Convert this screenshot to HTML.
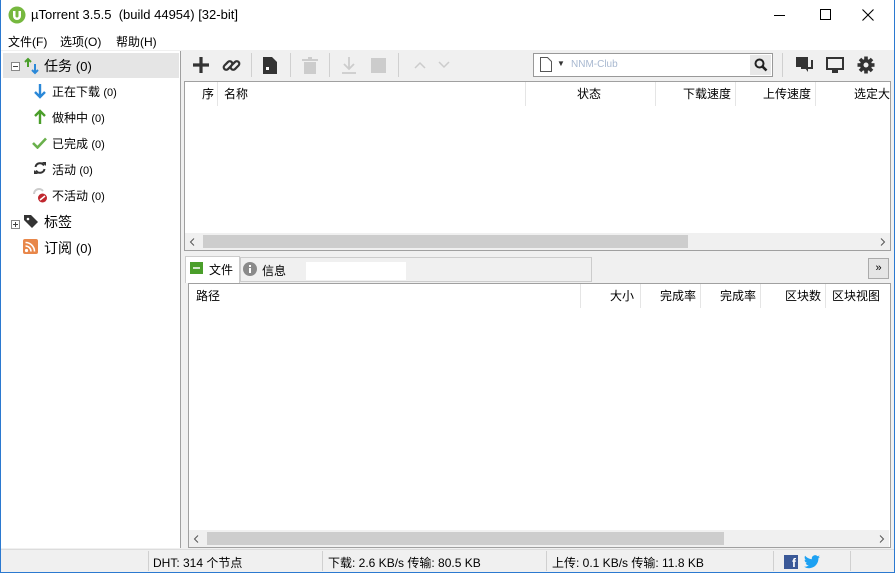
<!DOCTYPE html>
<html><head><meta charset="utf-8">
<style>
*{box-sizing:border-box;margin:0;padding:0}
body{width:895px;height:573px;position:relative;overflow:hidden;background:#f0f0f0;font-family:"Liberation Sans","Noto Sans CJK SC",sans-serif;font-size:12px;color:#000}
.a{position:absolute}
.frame{left:0;top:0;width:895px;height:573px;border:1px solid #2b79d0;border-top:none}
.t{white-space:nowrap}
.hdr{background:#fff;font-size:12px}
.col{position:absolute;top:0;height:24px;line-height:24px;border-right:1px solid #e5e5e5}
.sb{background:#f0f0f0}
.thumb{background:#cdcdcd}
.sep{width:1px;height:24px;background:#d0d0d0;top:53px}
</style></head><body>
<div class="a" style="left:0;top:0;width:895px;height:30px;background:#fff"></div>
<svg class="a" style="left:8px;top:6px" width="18" height="18" viewBox="0 0 18 18"><circle cx="9" cy="9" r="8.5" fill="#76b83f"/><path d="M5 5v5a4 4 0 0 0 8 0V5h-2.5v5a1.5 1.5 0 0 1-3 0V5z" fill="#fff"/></svg>
<div class="a t" style="left:31px;top:7px;font-size:13px">µTorrent 3.5.5 &nbsp;(build 44954) [32-bit]</div>
<div class="a" style="left:774px;top:15px;width:11px;height:1px;background:#000"></div>
<div class="a" style="left:820px;top:9px;width:11px;height:11px;border:1px solid #000"></div>
<svg class="a" style="left:862px;top:9px" width="12" height="12"><path d="M0.5 0.5L11.5 11.5M11.5 0.5L0.5 11.5" stroke="#000" stroke-width="1.1"/></svg>
<div class="a" style="left:0;top:30px;width:895px;height:20px;background:#fff"></div>
<div class="a t" style="left:8px;top:33px">文件(F)</div>
<div class="a t" style="left:60px;top:33px">选项(O)</div>
<div class="a t" style="left:116px;top:33px">帮助(H)</div>
<!-- sidebar -->
<div class="a" style="left:1px;top:51px;width:180px;height:497px;background:#fff;border-right:1px solid #a0a0a0"></div>
<div class="a" style="left:3px;top:53px;width:176px;height:25px;background:#e5e5e5"></div>
<svg class="a" style="left:11px;top:62px" width="9" height="9"><rect x="0.5" y="0.5" width="8" height="8" fill="#fff" stroke="#888"/><path d="M2 4.5h5" stroke="#444"/></svg>
<svg class="a" style="left:23px;top:57px" width="18" height="18"><path d="M5 10V2M2 5l3-3 3 3" stroke="#4a9e2a" stroke-width="2" fill="none"/><path d="M12 7v9M9 13l3 3 3-3" stroke="#2a88d8" stroke-width="2" fill="none"/></svg>
<div class="a t" style="left:44px;top:56px;font-size:14px">任务 <span style="font-size:13px">(0)</span></div>
<svg class="a" style="left:33px;top:83px" width="14" height="16"><path d="M7 1v13M2 9l5 5 5-5" stroke="#2a88d8" stroke-width="2.4" fill="none"/></svg>
<div class="a t" style="left:52px;top:83px">正在下载 <span style="font-size:11px">(0)</span></div>
<svg class="a" style="left:33px;top:109px" width="14" height="16"><path d="M7 15V2M2 7l5-5 5 5" stroke="#4a9e2a" stroke-width="2.4" fill="none"/></svg>
<div class="a t" style="left:52px;top:109px">做种中 <span style="font-size:11px">(0)</span></div>
<svg class="a" style="left:32px;top:137px" width="15" height="12"><path d="M1 6l4.5 4.5L14 1.5" stroke="#6ab04c" stroke-width="2.6" fill="none"/></svg>
<div class="a t" style="left:52px;top:135px">已完成 <span style="font-size:11px">(0)</span></div>
<svg class="a" style="left:33px;top:161px" width="14" height="14"><path d="M2.5 6A4.6 4.6 0 0 1 11 4.5M11.5 8A4.6 4.6 0 0 1 3 9.5" stroke="#333" stroke-width="2" fill="none"/><path d="M9 1l4 0 0 4z M5 13l-4 0 0-4z" fill="#333"/></svg>
<div class="a t" style="left:52px;top:161px">活动 <span style="font-size:11px">(0)</span></div>
<svg class="a" style="left:31px;top:186px" width="18" height="18"><path d="M3 8A5 5 0 0 1 12 5" stroke="#ccc" stroke-width="2" fill="none"/><circle cx="11.5" cy="12" r="4.5" fill="#c0262d"/><path d="M9 14l5-4" stroke="#fff" stroke-width="1.5"/></svg>
<div class="a t" style="left:52px;top:187px">不活动 <span style="font-size:11px">(0)</span></div>
<svg class="a" style="left:11px;top:220px" width="9" height="9"><rect x="0.5" y="0.5" width="8" height="8" fill="#fff" stroke="#888"/><path d="M2 4.5h5M4.5 2v5" stroke="#444"/></svg>
<svg class="a" style="left:23px;top:213px" width="16" height="16"><path d="M1 2h7l7 7-6 6-8-8z" fill="#333"/><circle cx="5" cy="6" r="1.3" fill="#fff"/></svg>
<div class="a t" style="left:44px;top:212px;font-size:14px">标签</div>
<svg class="a" style="left:23px;top:239px" width="15" height="15"><rect width="15" height="15" rx="2" fill="#e8874a"/><circle cx="3.5" cy="11.5" r="1.6" fill="#fff"/><path d="M2.5 7a5.5 5.5 0 0 1 5.5 5.5M2.5 3.5a9 9 0 0 1 9 9" stroke="#fff" stroke-width="1.6" fill="none"/></svg>
<div class="a t" style="left:44px;top:238px;font-size:14px">订阅 <span style="font-size:13px">(0)</span></div>
<!-- toolbar -->
<svg class="a" style="left:193px;top:57px" width="16" height="16"><path d="M8 0v16M0 8h16" stroke="#333" stroke-width="3.2"/></svg>
<svg class="a" style="left:222px;top:56px" width="19" height="19"><g stroke="#333" stroke-width="2.2" fill="none"><rect x="1" y="7" width="10" height="5" rx="2.5" transform="rotate(-45 6 9.5)"/><rect x="8" y="7" width="10" height="5" rx="2.5" transform="rotate(-45 13 9.5)"/></g></svg>
<div class="a sep" style="left:251px"></div>
<svg class="a" style="left:263px;top:57px" width="14" height="17"><path d="M0 0h9l5 5v12H0z" fill="#333"/><rect x="3" y="10" width="3" height="3" fill="#fff"/></svg>
<div class="a sep" style="left:290px"></div>
<svg class="a" style="left:302px;top:57px" width="16" height="17"><rect x="0" y="2" width="16" height="2" fill="#ccc"/><rect x="6" y="0" width="4" height="2" fill="#ccc"/><rect x="2" y="5" width="12" height="12" fill="#ccc"/></svg>
<div class="a sep" style="left:329px"></div>
<svg class="a" style="left:341px;top:57px" width="16" height="17"><path d="M8 0v12M3 7l5 5 5-5M1 16h14" stroke="#ccc" stroke-width="1.8" fill="none"/></svg>
<div class="a" style="left:371px;top:58px;width:15px;height:15px;background:#ccc"></div>
<div class="a sep" style="left:398px"></div>
<svg class="a" style="left:414px;top:61px" width="36" height="8"><path d="M1 7l5-5 5 5M25 1l5 5 5-5" stroke="#ccc" stroke-width="1.5" fill="none"/></svg>
<div class="a" style="left:533px;top:53px;width:240px;height:24px;border:1px solid #999;background:#fff"></div>
<svg class="a" style="left:540px;top:57px" width="12" height="15"><path d="M0.5 0.5h7l4 4v10h-11z" fill="#fff" stroke="#555"/></svg>
<div class="a t" style="left:557px;top:59px;font-size:8px;color:#333">▼</div>
<div class="a t" style="left:571px;top:59px;font-size:10px;color:#a8b8d0">NNM-Club</div>
<div class="a" style="left:750px;top:55px;width:21px;height:20px;background:#e8e8e8"></div>
<svg class="a" style="left:754px;top:58px" width="14" height="14"><circle cx="5.5" cy="5.5" r="4" stroke="#222" stroke-width="2" fill="none"/><path d="M8.5 8.5l4 4" stroke="#222" stroke-width="2.6"/></svg>
<div class="a sep" style="left:782px"></div>
<svg class="a" style="left:796px;top:57px" width="18" height="17"><rect x="0" y="0" width="12" height="10" fill="#333"/><path d="M5 11h11V3" stroke="#333" stroke-width="2" fill="none"/><path d="M12 11v4l-3-4z" fill="#333"/></svg>
<svg class="a" style="left:826px;top:57px" width="18" height="17"><rect x="1" y="1" width="16" height="11" stroke="#333" stroke-width="2" fill="none"/><rect x="6" y="12" width="6" height="4" fill="#333"/></svg>
<svg class="a" style="left:857px;top:56px" width="18" height="18" viewBox="0 0 18 18"><g fill="#333"><circle cx="9" cy="9" r="6"/><rect x="7.2" y="0.5" width="3.6" height="17"/><rect x="7.2" y="0.5" width="3.6" height="17" transform="rotate(45 9 9)"/><rect x="7.2" y="0.5" width="3.6" height="17" transform="rotate(90 9 9)"/><rect x="7.2" y="0.5" width="3.6" height="17" transform="rotate(135 9 9)"/></g><circle cx="9" cy="9" r="2.5" fill="#f0f0f0"/></svg>
<!-- upper list -->
<div class="a" style="left:184px;top:81px;width:707px;height:170px;background:#fff;border:1px solid #a0a0a0"></div>
<div class="a hdr" style="left:185px;top:82px;width:705px;height:26px">
<div class="col" style="left:0;width:33px;text-align:right;padding-right:3px">序</div>
<div class="col" style="left:33px;width:308px;padding-left:6px">名称</div>
<div class="col" style="left:341px;width:130px;text-align:right;padding-right:54px">状态</div>
<div class="col" style="left:471px;width:80px;text-align:right;padding-right:4px">下载速度</div>
<div class="col" style="left:551px;width:80px;text-align:right;padding-right:4px">上传速度</div>
<div class="col t" style="left:631px;width:80px;text-align:right;padding-right:6px;border:none">选定大</div>
</div>
<div class="a sb" style="left:185px;top:233px;width:705px;height:17px"></div>
<div class="a thumb" style="left:203px;top:235px;width:485px;height:13px"></div>
<svg class="a" style="left:189px;top:238px" width="6" height="8"><path d="M5 0.5L1.5 4 5 7.5" stroke="#555" fill="none"/></svg>
<svg class="a" style="left:880px;top:238px" width="6" height="8"><path d="M1 0.5L4.5 4 1 7.5" stroke="#555" fill="none"/></svg>
<!-- tabs -->
<div class="a" style="left:185px;top:256px;width:55px;height:27px;background:#fff;border:1px solid #ccc;border-bottom:none"></div>
<svg class="a" style="left:190px;top:262px" width="13" height="12"><rect width="13" height="12" fill="#4a9e2a"/><path d="M3 6h7" stroke="#fff" stroke-width="1.5"/></svg>
<div class="a t" style="left:209px;top:261px">文件</div>
<div class="a" style="left:240px;top:257px;width:352px;height:25px;border:1px solid #ccc;background:#f0f0f0"></div>
<svg class="a" style="left:243px;top:262px" width="14" height="14"><circle cx="7" cy="7" r="7" fill="#8a8a8a"/><rect x="6" y="6" width="2" height="5" fill="#fff"/><rect x="6" y="3" width="2" height="2" fill="#fff"/></svg>
<div class="a t" style="left:262px;top:262px">信息</div>
<div class="a" style="left:306px;top:262px;width:100px;height:18px;background:#fff"></div>
<div class="a" style="left:868px;top:258px;width:21px;height:21px;border:1px solid #aaa;background:#e5e5e5;text-align:center;font-size:11px;line-height:19px">»</div>
<!-- lower list -->
<div class="a" style="left:188px;top:283px;width:703px;height:265px;background:#fff;border:1px solid #a0a0a0"></div>
<div class="a hdr" style="left:189px;top:284px;width:700px;height:25px">
<div class="col" style="left:0;width:392px;padding-left:7px">路径</div>
<div class="col" style="left:392px;width:60px;text-align:right;padding-right:6px">大小</div>
<div class="col" style="left:452px;width:60px;text-align:right;padding-right:4px">完成率</div>
<div class="col" style="left:512px;width:60px;text-align:right;padding-right:4px">完成率</div>
<div class="col" style="left:572px;width:65px;text-align:right;padding-right:4px">区块数</div>
<div class="col t" style="left:637px;width:60px;padding-left:6px;border:none">区块视图</div>
</div>
<div class="a sb" style="left:189px;top:530px;width:700px;height:17px"></div>
<div class="a thumb" style="left:207px;top:532px;width:517px;height:13px"></div>
<svg class="a" style="left:193px;top:535px" width="6" height="8"><path d="M5 0.5L1.5 4 5 7.5" stroke="#555" fill="none"/></svg>
<svg class="a" style="left:879px;top:535px" width="6" height="8"><path d="M1 0.5L4.5 4 1 7.5" stroke="#555" fill="none"/></svg>
<!-- status -->
<div class="a" style="left:0;top:549px;width:895px;height:1px;background:#dcdcdc"></div>
<div class="a" style="left:148px;top:551px;width:1px;height:20px;background:#d0d0d0"></div>
<div class="a t" style="left:153px;top:554px">DHT: 314 个节点</div>
<div class="a" style="left:322px;top:551px;width:1px;height:20px;background:#d0d0d0"></div>
<div class="a t" style="left:328px;top:554px">下载: 2.6 KB/s 传输: 80.5 KB</div>
<div class="a" style="left:546px;top:551px;width:1px;height:20px;background:#d0d0d0"></div>
<div class="a t" style="left:552px;top:554px">上传: 0.1 KB/s 传输: 11.8 KB</div>
<div class="a" style="left:773px;top:551px;width:1px;height:20px;background:#d0d0d0"></div>
<div class="a" style="left:784px;top:555px;width:14px;height:14px;background:#3b5998;color:#fff;font-weight:bold;font-size:12px;text-align:right;line-height:16px;padding-right:2px">f</div>
<svg class="a" style="left:804px;top:555px" width="16" height="14" viewBox="0 0 16 14"><path d="M16 1.7a6.5 6.5 0 0 1-1.9.5A3.3 3.3 0 0 0 15.6.4a6.6 6.6 0 0 1-2.1.8A3.3 3.3 0 0 0 7.9 4.2 9.3 9.3 0 0 1 1.1.8a3.3 3.3 0 0 0 1 4.4 3.3 3.3 0 0 1-1.5-.4 3.3 3.3 0 0 0 2.6 3.2 3.3 3.3 0 0 1-1.5.1 3.3 3.3 0 0 0 3.1 2.3A6.6 6.6 0 0 1 0 11.7 9.3 9.3 0 0 0 5 13.2c6 0 9.4-5 9.4-9.4v-.4A6.7 6.7 0 0 0 16 1.7z" fill="#1da1f2"/></svg>
<div class="a" style="left:850px;top:551px;width:1px;height:20px;background:#d0d0d0"></div>
<div class="a frame"></div>
</body></html>
